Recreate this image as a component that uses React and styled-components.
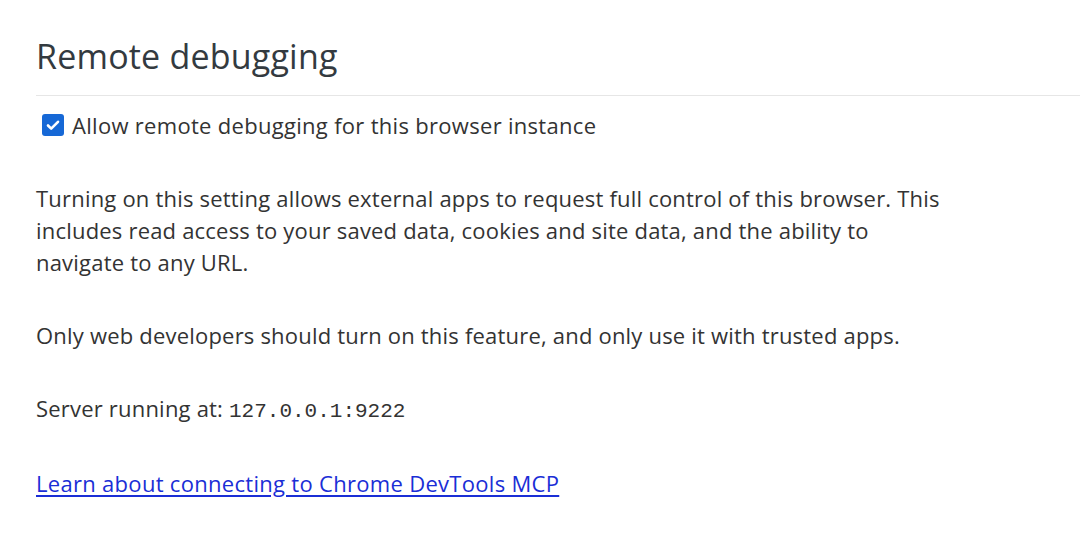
import React from 'react';
import styled, { createGlobalStyle } from 'styled-components';

const Global = createGlobalStyle`
  html, body {
    margin: 0;
    padding: 0;
    background: #ffffff;
  }
  body {
    font-family: "Open Sans", "Noto Sans", "Liberation Sans", sans-serif;
    color: #333333;
  }
`;

const Page = styled.section`
  display: flex;
  flex-direction: column;
  padding: 32px 0 0 36px;
`;

const Title = styled.h1`
  margin: 0;
  font-size: 34px;
  font-weight: 400;
  line-height: 48px;
  letter-spacing: 0.2px;
  color: #333a40;
`;

const Rule = styled.hr`
  margin: 15px 0 0;
  border: none;
  border-top: 1px solid #e6e6e6;
`;

const CheckRow = styled.label`
  display: flex;
  align-items: center;
  gap: 8px;
  margin: 14px 0 0 6px;
  font-size: 22px;
  line-height: 30px;
  letter-spacing: 0.3px;
  color: #333333;
`;

const Box = styled.span`
  display: flex;
  align-items: center;
  justify-content: center;
  width: 22px;
  height: 22px;
  border-radius: 3px;
  background: #1668d6;
`;

const Text = styled.p`
  margin: ${({ $top }) => $top}px 0 0;
  max-width: 915px;
  font-size: 22px;
  line-height: 32px;
  letter-spacing: 0.2px;
  color: #333333;
`;

const Mono = styled.span`
  font-family: "Liberation Mono", "DejaVu Sans Mono", monospace;
  font-size: 21px;
  letter-spacing: 0;
`;

const Link = styled.a`
  color: #1a2ed6;
  letter-spacing: 0.3px;
  text-decoration: underline;
  text-underline-offset: 3px;
`;

const App = () => (
  <>
    <Global />
    <Page>
      <Title>Remote debugging</Title>
      <Rule />
      <CheckRow>
        <Box>
          <svg width="16" height="16" viewBox="0 0 16 16">
            <path d="M3 8.5l3.2 3.2L13 4.8" fill="none" stroke="#fff" strokeWidth="2.6" strokeLinecap="round" strokeLinejoin="round" />
          </svg>
        </Box>
        Allow remote debugging for this browser instance
      </CheckRow>
      <Text $top={42}>
        Turning on this setting allows external apps to request full control of this browser. This
        includes read access to your saved data, cookies and site data, and the ability to
        navigate to any URL.
      </Text>
      <Text $top={41}>
        Only web developers should turn on this feature, and only use it with trusted apps.
      </Text>
      <Text $top={41}>
        Server running at: <Mono>127.0.0.1:9222</Mono>
      </Text>
      <Text $top={39}>
        <Link href="#">Learn about connecting to Chrome DevTools MCP</Link>
      </Text>
    </Page>
  </>
);

export default App;
